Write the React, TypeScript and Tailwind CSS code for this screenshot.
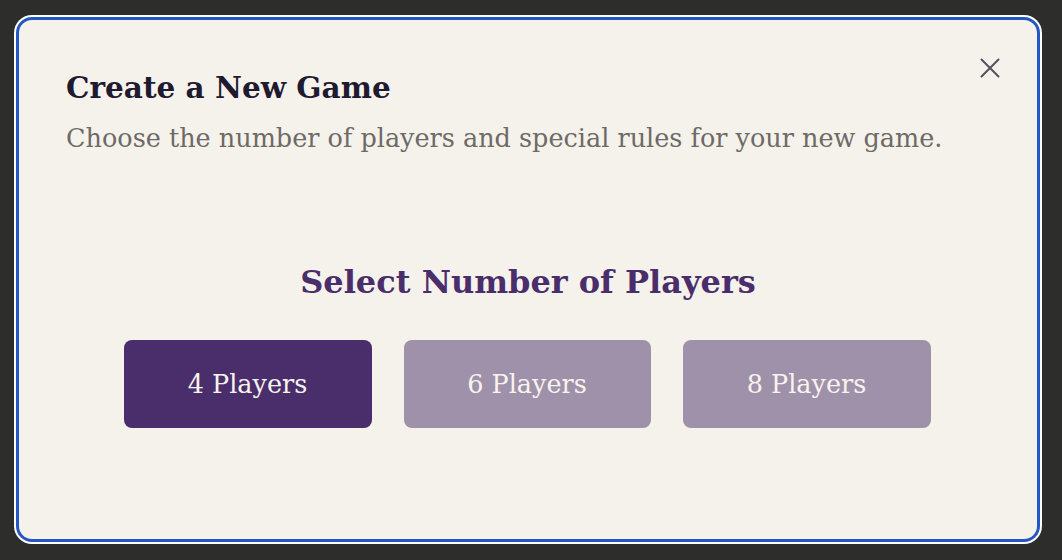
import React from "react";

export default function App() {
  const serif = { fontFamily: '"DejaVu Serif", "Liberation Serif", serif' };
  return (
    <div className="w-[1062px] h-[560px] bg-[#2d2d2b] flex pl-[14px] pr-[20px] pt-[15px] pb-[16px]" style={serif}>
      <div className="flex-1 rounded-[18px] bg-white p-[2px] flex">
        <div className="relative flex-1 rounded-[16px] border-[3px] border-[#2456c4] bg-[#f5f2eb] flex flex-col px-[47px] pt-[48px]">
          <button className="absolute right-[35px] top-[36px] text-[#55505e]">
            <svg width="24" height="24" viewBox="0 0 24 24" fill="none" stroke="currentColor" strokeWidth="2" strokeLinecap="round">
              <path d="M3.5 3.5l17 17M20.5 3.5l-17 17" />
            </svg>
          </button>
          <h1 className="text-[29.5px] leading-[40px] font-bold text-[#1f1a30]">Create a New Game</h1>
          <p className="mt-[13px] text-[25.5px] leading-[34px] text-[#6d6a67]">
            Choose the number of players and special rules for your new game.
          </p>
          <h2 className="mt-[107px] text-center text-[32px] leading-[40px] font-bold text-[#4a2e6c]">
            Select Number of Players
          </h2>
          <div className="mt-[38px] flex justify-center gap-[32px] pr-[2px]">
            <button className="w-[248px] h-[88px] rounded-[8px] bg-[#4a2e6c] text-[#f7f3ee] text-[25.5px]">4 Players</button>
            <button className="w-[247px] h-[88px] rounded-[8px] bg-[#a091ab] text-[#f7f3ee] text-[25.5px]">6 Players</button>
            <button className="w-[248px] h-[88px] rounded-[8px] bg-[#a091ab] text-[#f7f3ee] text-[25.5px]">8 Players</button>
          </div>
        </div>
      </div>
    </div>
  );
}
